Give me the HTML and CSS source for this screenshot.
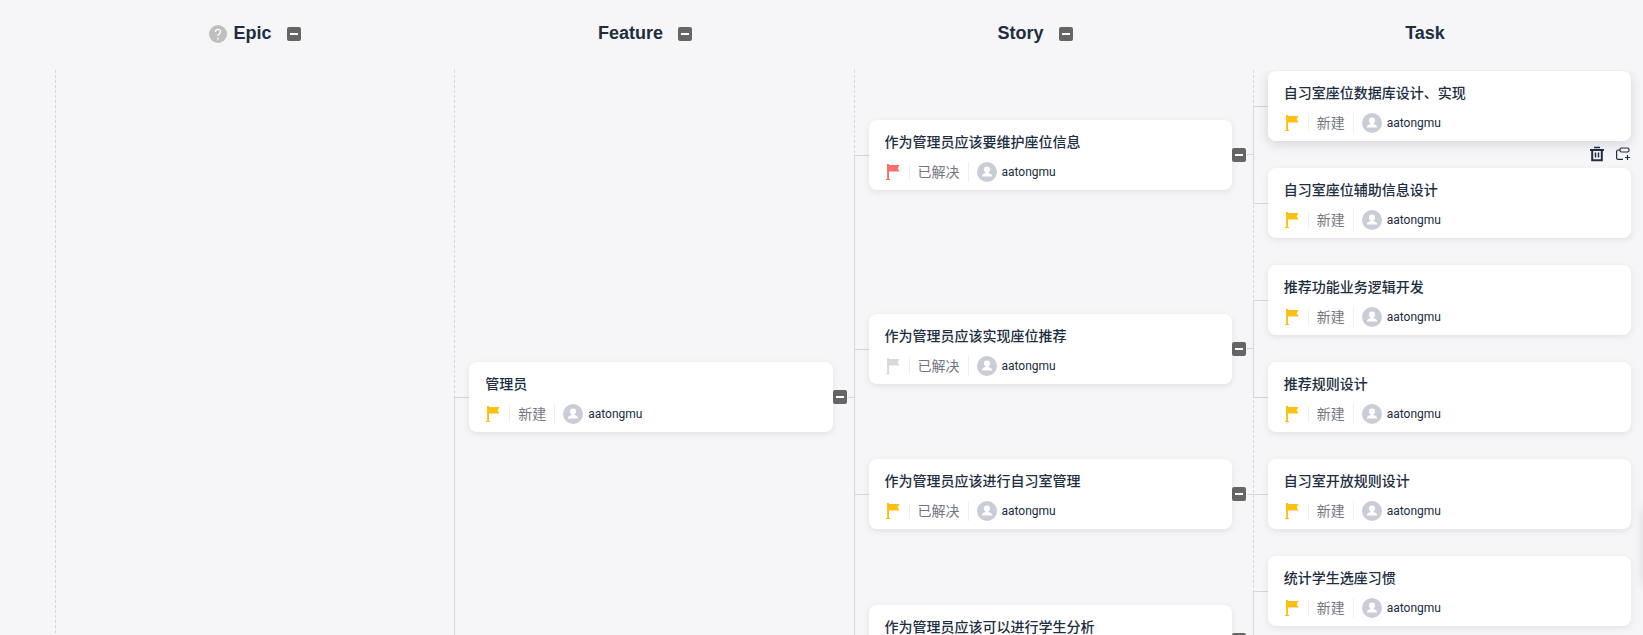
FILE: index.html
```html
<!DOCTYPE html>
<html lang="zh-CN">
<head>
<meta charset="utf-8">
<meta name="viewport" content="width=device-width, initial-scale=1">
<title>Epic / Feature / Story / Task</title>
<link rel="stylesheet" href="styles.css">
</head>
<body>
<svg class="sprite" aria-hidden="true">
  <symbol id="flag" viewBox="0 0 16 16"><path d="M2 0h2v1h10.500l-1.800 3.200 1.800 3.300H4V15h1v1H1v-1h1.200z"/></symbol>
  <symbol id="avatar" viewBox="0 0 20 20"><circle cx="10" cy="10" r="10" fill="#c9cdd8"/><circle cx="10" cy="7.500" r="3.100" fill="#fff"/><path d="M8.800 9h2.400v2c2.300.5 4 1.600 4 3.400H4.800c0-1.800 1.700-2.900 4-3.400z" fill="#fff"/></symbol>
</svg>
<header class="heads">
  <div class="head">
    <button class="help" aria-label="帮助"><svg viewBox="0 0 18 18"><circle cx="9" cy="9" r="9" fill="#bfbfbf"/><path d="M6.500 7C6.500 3.600 11.600 3.700 11.600 6.800 11.600 8.700 9 8.800 9 11" fill="none" stroke="#fff" stroke-width="1.200"/><circle cx="9" cy="13.500" r=".9" fill="#fff"/></svg></button>
    <h2>Epic</h2><button class="toggle" aria-label="收起 Epic"></button>
  </div>
  <div class="head"><h2>Feature</h2><button class="toggle" aria-label="收起 Feature"></button></div>
  <div class="head"><h2>Story</h2><button class="toggle" aria-label="收起 Story"></button></div>
  <div class="head"><h2>Task</h2></div>
</header>
<main class="board">
  <div class="lanes"><i></i><i></i><i></i><i></i></div>
  <ul class="tree root">
    <li class="node more">
      <article class="card"><h3>管理员</h3><div class="meta"><svg class="flag yellow"><use href="#flag"/></svg><span class="status">新建</span><span class="user"><svg><use href="#avatar"/></svg>aatongmu</span></div></article>
      <button class="toggle" aria-label="收起"></button><span class="stem"></span>
      <ul class="tree">
        <li class="node">
          <article class="card"><h3>作为管理员应该要维护座位信息</h3><div class="meta"><svg class="flag red"><use href="#flag"/></svg><span class="status">已解决</span><span class="user"><svg><use href="#avatar"/></svg>aatongmu</span></div></article>
          <button class="toggle" aria-label="收起"></button><span class="stem"></span>
          <ul class="tree">
            <li class="node">
              <article class="card active"><h3>自习室座位数据库设计、实现</h3><div class="meta"><svg class="flag yellow"><use href="#flag"/></svg><span class="status">新建</span><span class="user"><svg><use href="#avatar"/></svg>aatongmu</span></div>
                <div class="actions">
                  <button aria-label="删除"><svg viewBox="0 0 16 16" fill="none" stroke="#202d40"><path d="M5 1.500h6" stroke-width="1.500"/><path d="M1 4h14M3.200 4v10.200h9.600V4" stroke-width="2"/><path d="M6.500 6.500v5M9.500 6.500v5" stroke-width="1.500"/></svg></button>
                  <button aria-label="添加子项"><svg viewBox="0 0 16 16" fill="none" stroke="#202d40" stroke-width="1.200"><rect x="5" y="2" width="9" height="4" rx="1.500"/><path d="M5 4H3.200Q1.600 4 1.600 5.600v6.200q0 1.600 1.600 1.600H8M12.500 9v5M10 11.500h5"/></svg></button>
                </div>
              </article>
            </li>
            <li class="node"><article class="card"><h3>自习室座位辅助信息设计</h3><div class="meta"><svg class="flag yellow"><use href="#flag"/></svg><span class="status">新建</span><span class="user"><svg><use href="#avatar"/></svg>aatongmu</span></div></article></li>
          </ul>
        </li>
        <li class="node">
          <article class="card"><h3>作为管理员应该实现座位推荐</h3><div class="meta"><svg class="flag gray"><use href="#flag"/></svg><span class="status">已解决</span><span class="user"><svg><use href="#avatar"/></svg>aatongmu</span></div></article>
          <button class="toggle" aria-label="收起"></button><span class="stem"></span>
          <ul class="tree">
            <li class="node"><article class="card"><h3>推荐功能业务逻辑开发</h3><div class="meta"><svg class="flag yellow"><use href="#flag"/></svg><span class="status">新建</span><span class="user"><svg><use href="#avatar"/></svg>aatongmu</span></div></article></li>
            <li class="node"><article class="card"><h3>推荐规则设计</h3><div class="meta"><svg class="flag yellow"><use href="#flag"/></svg><span class="status">新建</span><span class="user"><svg><use href="#avatar"/></svg>aatongmu</span></div></article></li>
          </ul>
        </li>
        <li class="node">
          <article class="card"><h3>作为管理员应该进行自习室管理</h3><div class="meta"><svg class="flag yellow"><use href="#flag"/></svg><span class="status">已解决</span><span class="user"><svg><use href="#avatar"/></svg>aatongmu</span></div></article>
          <button class="toggle" aria-label="收起"></button><span class="stem"></span>
          <ul class="tree">
            <li class="node"><article class="card"><h3>自习室开放规则设计</h3><div class="meta"><svg class="flag yellow"><use href="#flag"/></svg><span class="status">新建</span><span class="user"><svg><use href="#avatar"/></svg>aatongmu</span></div></article></li>
          </ul>
        </li>
        <li class="node">
          <article class="card"><h3>作为管理员应该可以进行学生分析</h3></article>
          <button class="toggle" aria-label="收起"></button><span class="stem"></span>
          <ul class="tree">
            <li class="node"><article class="card"><h3>统计学生选座习惯</h3><div class="meta"><svg class="flag yellow"><use href="#flag"/></svg><span class="status">新建</span><span class="user"><svg><use href="#avatar"/></svg>aatongmu</span></div></article></li>
            <li class="node"><article class="card"></article></li>
          </ul>
        </li>
      </ul>
    </li>
  </ul>
</main>
<aside class="dock"></aside>
</body>
</html>
```
FILE: styles.css
```css
* { box-sizing: border-box; }
:root {
  --col: calc((100vw - 46px) / 4);
  --line: #d5d6d9;
}
body {
  margin: 0;
  height: 100vh;
  display: flex;
  flex-direction: column;
  overflow: hidden;
  position: relative;
  background: #f6f6f8;
  color: #202d40;
  font-family: "Liberation Sans", "Noto Sans CJK SC", sans-serif;
}
h2, h3, ul { margin: 0; padding: 0; }
ul { list-style: none; }
button { padding: 0; border: 0; background: none; cursor: pointer; }
svg { display: block; }
.sprite { display: none; }

.heads {
  flex: none;
  display: grid;
  grid-template-columns: repeat(4, 1fr);
  height: 70px;
  padding: 0 23px 4px 60px;
}
.head { display: flex; align-items: center; justify-content: center; }
.head h2 { font-size: 18px; line-height: 24px; font-weight: 700; }
.head .toggle { margin: 2px 0 0 15px; }
.help { width: 18px; height: 18px; margin: 2px 6px 0 0; }

.toggle {
  flex: none;
  display: flex;
  align-items: center;
  justify-content: center;
  width: 14px;
  height: 14px;
  border-radius: 2px;
  background: #666;
}
.toggle::before { content: ""; width: 8px; height: 2px; background: #fff; }

.board { flex: 1; min-height: 0; position: relative; overflow: hidden; }
.lanes {
  position: absolute;
  inset: 0 0 0 55px;
  display: grid;
  grid-template-columns: repeat(4, var(--col));
}
.lanes i {
  width: 1px;
  background: repeating-linear-gradient(var(--line) 0 3px, transparent 3px 5px);
}

.tree { display: flex; flex-direction: column; gap: 27px; }
.root { padding: 1px 0 0 calc(55px + var(--col)); }
.node {
  position: relative;
  display: flex;
  align-items: center;
  padding-left: 15px;
}
/* elbow from the parent's stem to this card */
.node::before {
  content: "";
  position: absolute;
  left: 0;
  top: 50%;
  width: 15px;
  height: 1px;
  background: var(--line);
}
/* trunk shared with the sibling nodes */
.node::after {
  content: "";
  position: absolute;
  left: 0;
  top: -14px;
  bottom: -14px;
  width: 1px;
  background: var(--line);
}
.node:first-child::after { top: 50%; }
.node:last-child::after { bottom: 50%; }
.node.more::after { bottom: -100px; }
.stem { flex: none; width: 6px; height: 1px; margin-left: 1px; background: var(--line); }

.card {
  flex: none;
  position: relative;
  z-index: 1;
  width: calc(var(--col) - 36px);
  min-height: 70px;
  padding: 11px 16px 8px;
  border-radius: 8px;
  background: #fff;
  box-shadow: 0 2px 6px rgba(32, 45, 64, .1);
}
.card.active { box-shadow: 0 3px 12px rgba(32, 45, 64, .16); }
.card h3 {
  font: 500 14px/20px "Noto Sans CJK SC", sans-serif;
}
.meta {
  display: flex;
  align-items: center;
  height: 20px;
  margin-top: 11px;
}
.flag { flex: none; width: 16px; height: 16px; }
.yellow { fill: #fbc011; }
.red { fill: #f96e68; }
.gray { fill: #d8d9dc; }
.status {
  height: 16px;
  margin-left: 8px;
  padding-left: 8px;
  border-left: 1px solid #eeeff1;
  color: #74777f;
  font: 400 14px/14px "Noto Sans CJK SC", sans-serif;
}
.user {
  display: flex;
  align-items: center;
  gap: 5px;
  margin-left: 8px;
  padding-left: 8px;
  border-left: 1px solid #eeeff1;
  font: 400 12px/20px Roboto, sans-serif;
}
.user svg { width: 20px; height: 20px; }
.actions {
  position: absolute;
  right: 0;
  top: calc(100% + 5px);
  display: flex;
  gap: 10px;
}
.actions svg { width: 16px; height: 16px; }
.dock {
  position: absolute;
  left: 100%;
  bottom: 50px;
  width: 40px;
  height: 78px;
  box-shadow: 0 0 10px rgba(32, 45, 64, .14);
}
```
